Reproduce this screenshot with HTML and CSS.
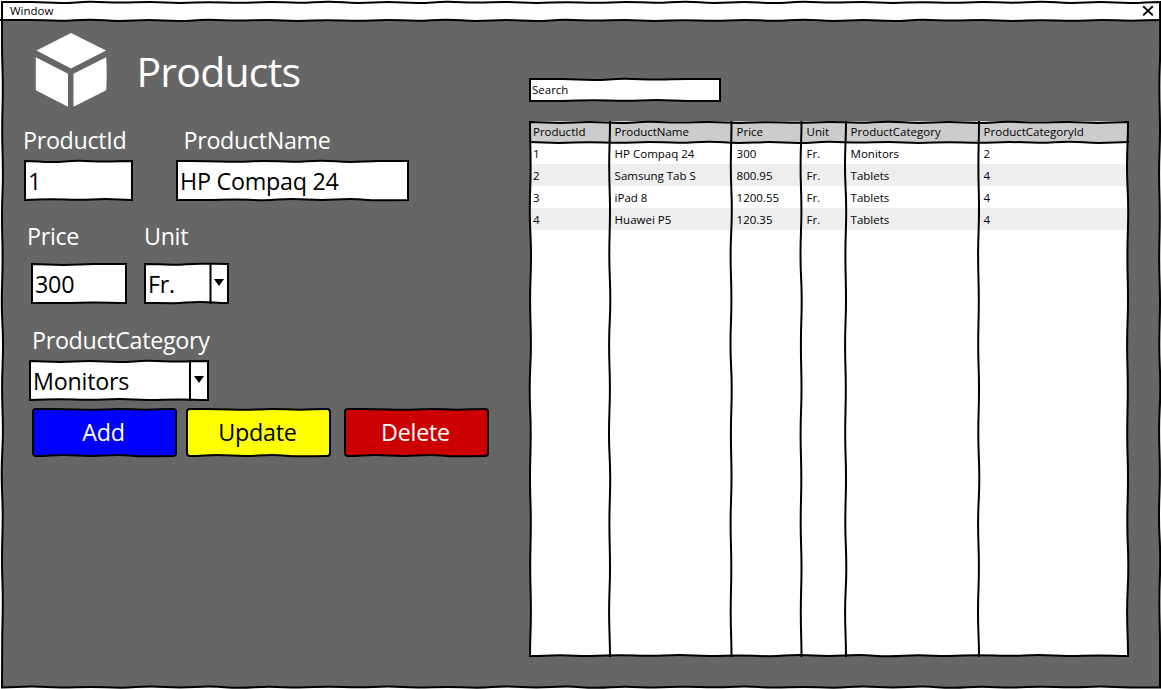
FILE: index.html
```html
<!DOCTYPE html>
<html lang="en">
<head>
<meta charset="utf-8">
<title>Products</title>
<link rel="stylesheet" href="styles.css">
</head>
<body>
<div class="window">
  <header class="titlebar">
    <span>Window</span>
    <svg class="close" viewBox="0 0 12 12"><path d="M1.2 1.2 10.8 10.4M10.8 1.2 1.2 10.4"/></svg>
  </header>
  <main class="content">
    <section class="form">
      <div class="heading">
        <svg class="cube" viewBox="0 0 72 76"><path d="M36 1 71 18.600 36 36.500 1.500 18.600ZM.8 25.200 33 41.800V74.700L.8 58.200ZM71.200 25.200 38.500 41.800V74.700L71.200 58.200Q72.200 42 71.200 25.200Z"/></svg>
        <h1>Products</h1>
      </div>
      <div class="line line-id">
        <div class="field id"><label>ProductId</label><div class="box sketch">1</div></div>
        <div class="field name"><label>ProductName</label><div class="box sketch">HP Compaq 24</div></div>
      </div>
      <div class="line line-price">
        <div class="field price"><label>Price</label><div class="box sketch">300</div></div>
        <div class="field unit"><label>Unit</label><div class="box sketch" data-v="66.5">Fr.<i class="arrow"></i></div></div>
      </div>
      <div class="line line-category">
        <div class="field category"><label>ProductCategory</label><div class="box sketch" data-v="161">Monitors<i class="arrow"></i></div></div>
      </div>
      <div class="actions">
        <div class="button add sketch" data-r="3">Add</div>
        <div class="button update sketch" data-r="3">Update</div>
        <div class="button delete sketch" data-r="3">Delete</div>
      </div>
    </section>
    <section class="list">
      <div class="search sketch">Search</div>
      <div class="table sketch" data-v="81,202.5,272.5,317,450" data-h="21">
        <div class="row head"><span>ProductId</span><span>ProductName</span><span>Price</span><span>Unit</span><span>ProductCategory</span><span>ProductCategoryId</span></div>
        <div class="row"><span>1</span><span>HP Compaq 24</span><span>300</span><span>Fr.</span><span>Monitors</span><span>2</span></div>
        <div class="row"><span>2</span><span>Samsung Tab S</span><span>800.95</span><span>Fr.</span><span>Tablets</span><span class="navy">4</span></div>
        <div class="row"><span>3</span><span>iPad 8</span><span>1200.55</span><span>Fr.</span><span>Tablets</span><span class="navy">4</span></div>
        <div class="row"><span>4</span><span>Huawei P5</span><span>120.35</span><span>Fr.</span><span>Tablets</span><span class="navy">4</span></div>
      </div>
    </section>
  </main>
</div>
<script src="sketch.js"></script>
</body>
</html>
```
FILE: styles.css
```css
* { box-sizing: border-box; }
body {
  margin: 0;
  background: #fff;
  color: #000;
  font-family: "Open Sans", "Noto Sans", sans-serif;
  font-size: 11.5px;
}
.window {
  position: relative;
  isolation: isolate;
  width: 1161px;
  height: 689px;
  padding: 1px 1px 1px 2px;
  overflow: hidden;
}
.titlebar {
  display: flex;
  justify-content: space-between;
  height: 19px;
  padding: 0 6px 0 8px;
  line-height: 20px;
}
.close { width: 12px; height: 12px; margin-top: 4px; fill: none; stroke: #000; stroke-width: 1.9; }
.content { display: flex; height: 667px; }
.form { width: 527px; padding: 12px 0 0 22px; color: #fff; }
.heading { display: flex; height: 92px; padding-left: 10.5px; }
.cube { width: 72px; height: 76px; fill: #fff; }
h1 {
  margin: 0 0 0 30px;
  font-size: 41px;
  font-weight: 400;
  line-height: 78px;
  letter-spacing: -.8px;
}
.line { display: flex; }
.line-price { margin-top: 19px; padding-left: 7px; }
.line-category { margin-top: 20px; padding-left: 5px; }
label {
  display: block;
  height: 32px;
  font-size: 23.3px;
  line-height: 33px;
  letter-spacing: -.33px;
}
.box {
  position: relative;
  isolation: isolate;
  height: 41px;
  padding: 0 0 0 4px;
  font-size: 23.3px;
  line-height: 42px;
  letter-spacing: -.25px;
  color: #000;
  --fill: #fff;
}
.id { width: 109px; }
.id label { margin: 0 0 4px -1px; }
.name { width: 233px; margin-left: 43px; }
.name label { margin: 0 0 4px 7.5px; }
.price { width: 96px; }
.price label { margin: 0 0 11px -4px; }
.unit { width: 85px; margin-left: 17px; }
.unit label { margin-bottom: 11px; }
.category { width: 180px; }
.category label { margin: 0 0 4px 3px; }
.arrow {
  position: absolute;
  right: 5px;
  top: 16px;
  border: solid transparent;
  border-width: 7px 5px 0;
  border-top-color: #000;
}
.actions { display: flex; padding: 7px 0 0 8px; }
.button {
  position: relative;
  isolation: isolate;
  width: 145px;
  height: 49px;
  margin-right: 9px;
  padding-right: 2px;
  text-align: center;
  font-size: 23.3px;
  line-height: 49px;
  letter-spacing: -.25px;
}
.add { --fill: #00f; }
.update { --fill: #ff0; color: #000; margin-right: 13px; }
.delete { --fill: #c00; }
.search {
  position: relative;
  isolation: isolate;
  width: 192px;
  height: 24px;
  margin: 58px 0 19px;
  padding-left: 3px;
  line-height: 24px;
  --fill: #fff;
}
.table {
  position: relative;
  isolation: isolate;
  width: 600px;
  height: 536px;
  padding: 0 1px;
  --fill: #fff;
}
.row {
  display: grid;
  grid-template-columns: 80px 122px 70px 44px 133px 149px;
  height: 22px;
  line-height: 24px;
}
.row span { padding-left: 4.6px; white-space: nowrap; }
.row span:first-child { padding-left: 3px; }
.row:nth-child(odd) { background: #eee; }
.row:nth-child(even) { background: #fff; }
.row.head { height: 21px; line-height: 21px; background: #ccc; }
.table .navy { color: #003; }
.ink { position: absolute; left: 0; top: 0; overflow: visible; pointer-events: none; }
.ink path { stroke-width: 2; stroke: #000; fill: none; }
.ink.fill { z-index: -1; }
.ink.fill path { fill: var(--fill); stroke: none; }
.ink.fill .frame { fill: #666; }
.ink.fill .bar { fill: #fff; }
```
FILE: sketch.js
```js
// Draws hand-drawn outlines: straight edges that drift by up to a pixel.
const NS = 'http://www.w3.org/2000/svg';
const drift = [0, .7, -.3, .9, .1, 1, -.2, .6, 0, .9, .2, .8];
let seed = 0;

function edge(x1, y1, x2, y2, nx, ny) {
  const len = Math.hypot(x2 - x1, y2 - y1);
  const n = Math.max(1, Math.round(len / (ny ? 30 : 44)));
  const at = i => {
    const d = i === 0 || i === n ? 0 : drift[(i + seed) % drift.length];
    return [x1 + (x2 - x1) * i / n + nx * d, y1 + (y2 - y1) * i / n + ny * d];
  };
  let d = '';
  let [px, py] = at(0);
  for (let i = 1; i <= n; i++) {
    const [x, y] = at(i);
    d += ny
      ? `C${(px + x) / 2} ${py} ${(px + x) / 2} ${y} ${x} ${y}`
      : `C${px} ${(py + y) / 2} ${x} ${(py + y) / 2} ${x} ${y}`;
    px = x; py = y;
  }
  seed += 2;
  return d;
}

function outline(l, t, r, b, c) {
  const q = (x, y, ex, ey) => c ? `Q${x} ${y} ${ex} ${ey}` : '';
  return `M${l + c} ${t}` + edge(l + c, t, r - c, t, 0, 1) + q(r, t, r, t + c) +
    edge(r, t + c, r, b - c, -1, 0) + q(r, b, r - c, b) +
    edge(r - c, b, l + c, b, 0, -1) + q(l, b, l, b - c) +
    edge(l, b - c, l, t + c, 1, 0) + q(l, t, l + c, t) + 'Z';
}

function layer(host, cls, paths) {
  const svg = document.createElementNS(NS, 'svg');
  svg.setAttribute('class', 'ink ' + cls);
  svg.setAttribute('width', host.clientWidth);
  svg.setAttribute('height', host.clientHeight);
  for (const [d, name] of paths) {
    const p = document.createElementNS(NS, 'path');
    p.setAttribute('d', d);
    if (name) p.setAttribute('class', name);
    svg.append(p);
  }
  host.append(svg);
}

const list = s => (s ? s.split(',').map(Number) : []);
document.querySelectorAll('.sketch').forEach(el => {
  const w = el.clientWidth, h = el.clientHeight;
  seed = Math.round(w / 7);
  const frame = outline(1, 1, w - 1, h - 1, Number(el.dataset.r || 0));
  const lines = [[frame]];
  list(el.dataset.v).forEach(x => lines.push([`M${x} 0` + edge(x, 0, x, h, -1, 0)]));
  list(el.dataset.h).forEach(y => lines.push([`M0 ${y}` + edge(0, y, w, y, 0, 1)]));
  layer(el, 'fill', [[frame]]);
  layer(el, 'lines', lines);
});

const win = document.querySelector('.window');
seed = 3;
const frame = outline(2, 2, 1160, 687.5, 0);
layer(win, 'fill', [[frame, 'frame'], ['M2 2H1160V20H2Z', 'bar']]);
layer(win, 'lines', [[frame], ['M0 20' + edge(0, 20, 1161, 20, 0, 1)]]);
```
